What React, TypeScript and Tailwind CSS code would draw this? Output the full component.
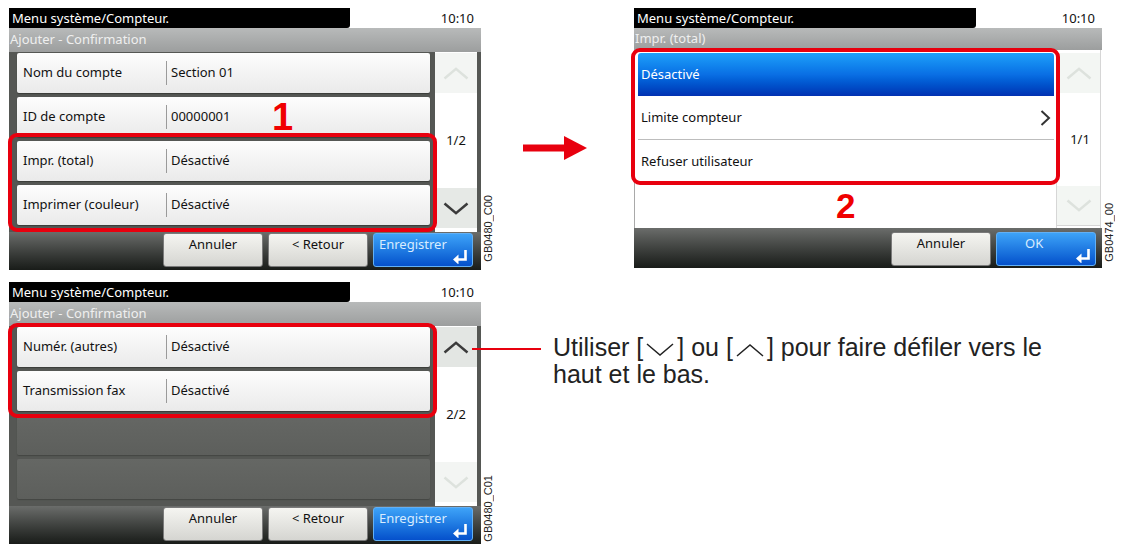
import React from "react";

const RED = "#e8000e";

function Chevron({ up, color, w = 26, h = 13, sw = 2.5 }: { up?: boolean; color: string; w?: number; h?: number; sw?: number }) {
  return (
    <svg width={w} height={h} viewBox="0 0 26 13" fill="none">
      <path
        d={up ? "M1.5 11.5 L13 1.8 L24.5 11.5" : "M1.5 1.5 L13 11.2 L24.5 1.5"}
        stroke={color}
        strokeWidth={sw}
      />
    </svg>
  );
}

function EnterIcon() {
  return (
    <svg width="15" height="15" viewBox="0 0 15 15" fill="none">
      <path d="M12.5 1 V10.5 H4" stroke="#ffffff" strokeWidth="2.6" />
      <polygon points="0,10.5 5.5,5.5 5.5,15.5" fill="#ffffff" />
    </svg>
  );
}

function Header({ sub, barW, subH }: { sub: string; barW: string; subH: string }) {
  return (
    <>
      <div className="flex h-[20px]">
        <div className={`${barW} rounded-br-[3px] bg-black pl-[3px] text-[13px] leading-[20px] text-white`}>
          Menu système/Compteur.
        </div>
        <div className="ml-auto pr-[7px] text-[13px] leading-[20px] text-[#111]">10:10</div>
      </div>
      <div className={`${subH} flex items-center bg-linear-to-b from-[#b8baba] to-[#9c9e9e] pl-[1px] text-[13px] text-[#efefef]`}>
        {sub}
      </div>
    </>
  );
}

function FieldRow({ label, value }: { label: string; value: string }) {
  return (
    <div className="flex h-[40px] items-center rounded-[2px] bg-linear-to-b from-[#fdfdfd] to-[#eaeaea] text-[13px] text-[#111] shadow-[0_1px_1px_#3a3c39]">
      <span className="w-[149px] pl-[6px]">{label}</span>
      <span className="h-[24px] w-px bg-[#9a9a9a]" />
      <span className="pl-[4px]">{value}</span>
    </div>
  );
}

function EmptyRow() {
  return <div className="h-[40px] rounded-[2px] bg-linear-to-b from-[#656764] to-[#5d5f5c] shadow-[0_1px_1px_#444643]" />;
}

function ScrollCol({ page, upActive, downActive }: { page: string; upActive?: boolean; downActive?: boolean }) {
  return (
    <div className="ml-[5px] flex w-[42px] flex-col bg-white pt-[1px] pb-[4px]">
      <div className={`flex h-[40px] items-center justify-center ${upActive ? "bg-[#e3e6e3]" : "bg-[#f3f5f3]"}`}>
        <Chevron up color={upActive ? "#3b3b3b" : "#dde2dd"} />
      </div>
      <div className="flex flex-1 items-center justify-center text-[13px] text-[#111]">{page}</div>
      <div className={`flex h-[40px] items-center justify-center ${downActive ? "bg-[#e6e9e6]" : "bg-[#f3f5f3]"}`}>
        <Chevron color={downActive ? "#3b3b3b" : "#dde2dd"} />
      </div>
    </div>
  );
}

function GrayButton({ label }: { label: string }) {
  return (
    <div className="h-[34px] w-[100px] rounded-[3px] border border-[#7a7a7a] bg-linear-to-b from-[#f5f5f1] to-[#d5d5d1] pt-[2px] text-center text-[13px] leading-[17px] text-[#111]">
      {label}
    </div>
  );
}

function BlueButton({ label, pad }: { label: string; pad: string }) {
  return (
    <div className={`relative h-[34px] w-[100px] rounded-[3px] border border-[#62b0f5] bg-linear-to-b from-[#3ea3f8] to-[#0650cb] pt-[2px] ${pad} text-[13px] leading-[17px] text-[#d8ecff]`}>
      {label}
      <span className="absolute right-[4px] bottom-[2px]">
        <EnterIcon />
      </span>
    </div>
  );
}

function BottomBar({ children, h, pt, pr }: { children: React.ReactNode; h: string; pt: string; pr: string }) {
  return (
    <div className={`flex ${h} justify-end gap-[5px] bg-linear-to-b from-[#6b6d6b] to-[#191c19] ${pt} ${pr}`}>{children}</div>
  );
}

function RedBox({ className }: { className: string }) {
  return <div className={`pointer-events-none absolute rounded-[9px] border-[4px] border-[#e8000e] ${className}`} />;
}

function Code({ text, pb }: { text: string; pb: string }) {
  return (
    <div className={`flex w-[14px] items-end ${pb}`}>
      <span className="rotate-180 font-['Liberation_Sans',sans-serif] text-[11px] leading-[14px] text-[#222] [writing-mode:vertical-rl]">
        {text}
      </span>
    </div>
  );
}

function AccountScreen({
  rows,
  empty,
  page,
  upActive,
  downActive,
}: {
  rows: [string, string][];
  empty: number;
  page: string;
  upActive?: boolean;
  downActive?: boolean;
}) {
  return (
    <div className="w-[472px]">
      <Header sub="Ajouter - Confirmation" barW="w-[341px]" subH="h-[24px]" />
      <div className="flex h-[180px] bg-[#555754] pr-[4px] pl-[8px]">
        <div className="flex w-[413px] flex-col gap-[4px] pt-[1px]">
          {rows.map(([l, v]) => (
            <FieldRow key={l} label={l} value={v} />
          ))}
          {Array.from({ length: empty }).map((_, i) => (
            <EmptyRow key={i} />
          ))}
        </div>
        <ScrollCol page={page} upActive={upActive} downActive={downActive} />
      </div>
      <BottomBar h="h-[38px]" pt="pt-[1px]" pr="pr-[8px]">
        <GrayButton label="Annuler" />
        <GrayButton label="< Retour" />
        <BlueButton label="Enregistrer" pad="pl-[5px]" />
      </BottomBar>
    </div>
  );
}

function LimitScreen() {
  return (
    <div className="w-[468px]">
      <Header sub="Impr. (total)" barW="w-[342px]" subH="h-[22px]" />
      <div className="flex h-[178px] bg-white">
        <div className="flex w-[420px] flex-col border-l border-[#a9a9a9] pt-[3px] pl-[3px] text-[13px] text-[#111]">
          <div className="flex h-[43px] items-center rounded-t-[3px] bg-linear-to-b from-[#20a0fa] via-[#0a6fe4] to-[#0331b2] pl-[3px] text-white">
            Désactivé
          </div>
          <div className="flex h-[44px] items-center border-b border-[#bdbdbd] pl-[3px]">
            Limite compteur
            <svg className="mr-[3px] ml-auto" width="11" height="16" viewBox="0 0 11 16" fill="none">
              <path d="M1.5 1 L9 8 L1.5 15" stroke="#333" strokeWidth="2" />
            </svg>
          </div>
          <div className="flex h-[44px] items-center border-b border-[#bdbdbd] pl-[3px]">Refuser utilisateur</div>
        </div>
        <div className="ml-[2px] flex w-[45px] flex-col border-x border-[#d6d6d6] pt-[3px] pb-[2px]">
          <div className="flex h-[40px] items-center justify-center bg-[#f3f6f3]">
            <Chevron up color="#dde2dd" />
          </div>
          <div className="flex flex-1 items-center justify-center pl-[3px] text-[13px] text-[#111]">1/1</div>
          <div className="flex h-[40px] items-center justify-center border-b border-[#d6d6d6] bg-[#f3f6f3]">
            <Chevron color="#dde2dd" />
          </div>
        </div>
      </div>
      <BottomBar h="h-[40px]" pt="pt-[4px]" pr="pr-[6px]">
        <GrayButton label="Annuler" />
        <BlueButton label="OK" pad="pl-[28px]" />
      </BottomBar>
    </div>
  );
}

function BigArrow() {
  return (
    <svg width="64" height="24" viewBox="0 0 64 24">
      <rect x="0" y="8.5" width="44" height="7" fill={RED} />
      <polygon points="41,0 64,12 41,24" fill={RED} />
    </svg>
  );
}

function TextChevron({ up }: { up?: boolean }) {
  return (
    <svg className="mx-[3px] inline-block align-[-1px]" width="28" height="14" viewBox="0 0 28 14" fill="none">
      <path d={up ? "M1 13 L14 2 L27 13" : "M1 1 L14 12 L27 1"} stroke="#222" strokeWidth="1.5" />
    </svg>
  );
}

export default function App() {
  return (
    <div className="relative h-[554px] w-[1132px] overflow-hidden bg-white font-['Noto_Sans',sans-serif]">
      <div className="flex pt-[8px] pl-[9px]">
        <div className="relative">
          <AccountScreen
            rows={[
              ["Nom du compte", "Section 01"],
              ["ID de compte", "00000001"],
              ["Impr. (total)", "Désactivé"],
              ["Imprimer (couleur)", "Désactivé"],
            ]}
            empty={0}
            page="1/2"
            downActive
          />
          <RedBox className="top-[125px] left-[-1px] h-[99px] w-[429px]" />
          <span className="absolute top-[90px] left-[263px] font-['Liberation_Sans',sans-serif] text-[38px] leading-none font-bold text-[#f00000]">
            1
          </span>
        </div>
        <Code text="GB0480_C00" pb="pb-[8px]" />
        <div className="ml-[28px] pt-[128px]">
          <BigArrow />
        </div>
        <div className="relative ml-[47px]">
          <LimitScreen />
          <RedBox className="top-[40px] left-[-3px] h-[137px] w-[429px]" />
          <span className="absolute top-[180px] left-[202px] font-['Liberation_Sans',sans-serif] text-[35px] leading-none font-bold text-[#f00000]">
            2
          </span>
        </div>
        <Code text="GB0474_00" pb="pb-[8px]" />
      </div>

      <div className="relative mt-[12px] flex pl-[9px]">
        <div className="relative">
          <AccountScreen
            rows={[
              ["Numér. (autres)", "Désactivé"],
              ["Transmission fax", "Désactivé"],
            ]}
            empty={2}
            page="2/2"
            upActive
          />
          <RedBox className="top-[41px] left-[-1px] h-[95px] w-[429px]" />
        </div>
        <Code text="GB0480_C01" pb="pb-[2px]" />
        <div className="absolute top-[66px] left-[472px] h-[2px] w-[69px] bg-[#e8000e]" />
        <p className="mt-[52px] ml-[58px] font-['Liberation_Sans',sans-serif] text-[25px] leading-[27px] text-[#222]">
          Utiliser [<TextChevron />] ou [<TextChevron up />] pour faire défiler vers le
          <br />
          haut et le bas.
        </p>
      </div>
    </div>
  );
}
